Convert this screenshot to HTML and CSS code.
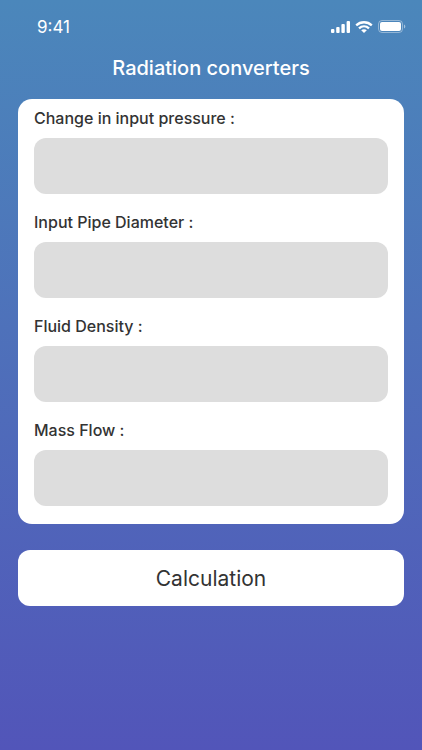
FILE: index.html
```
<!DOCTYPE html>
<html lang="en">
<head>
    <meta charset="UTF-8">
    <meta name="viewport" content="width=device-width, initial-scale=1.0">
    <title>Radiation converters</title>
    <link rel="stylesheet" href="styles.css">
</head>
<body>

<div class="status-bar">
    <span class="time">9:41</span>
    <div class="status-icons">
        <svg width="19" height="12" viewBox="0 0 19 12" fill="#fff">
            <rect x="0" y="8" width="3.4" height="4" rx="1"/>
            <rect x="5.2" y="6" width="3.4" height="6" rx="1"/>
            <rect x="10.4" y="3" width="3.4" height="9" rx="1"/>
            <rect x="15.6" y="0" width="3.4" height="12" rx="1"/>
        </svg>
        <svg width="18" height="12" viewBox="0 0 18 12" fill="none" stroke="#fff" stroke-width="2.3">
            <path d="M1.2 4.3C5.6 0.2 12.4 0.2 16.8 4.3"/>
            <path d="M4 7.4C6.9 4.7 11.1 4.7 14 7.4"/>
            <path d="M9 12L6.2 9.2C7.8 7.8 10.2 7.8 11.8 9.2Z" fill="#fff" stroke="none"/>
        </svg>
        <svg width="28" height="13" viewBox="0 0 28 13" fill="#fff">
            <rect x="0.5" y="0.5" width="24" height="12" rx="3.5" fill="none" stroke="#fff" stroke-opacity="0.4"/>
            <rect x="2" y="2" width="21" height="9" rx="2"/>
            <path d="M26 4.5C27.8 5.2 27.8 7.8 26 8.5Z" fill-opacity="0.5"/>
        </svg>
    </div>
</div>

<h1>Radiation converters</h1>

<form class="converter">
    <div class="card">
        <label for="pressure">Change in input pressure :</label>
        <input type="text" id="pressure">

        <label for="diameter">Input Pipe Diameter :</label>
        <input type="text" id="diameter">

        <label for="density">Fluid Density :</label>
        <input type="text" id="density">

        <label for="massFlow">Mass Flow :</label>
        <input type="text" id="massFlow">
    </div>
    <button type="button">Calculation</button>
</form>

</body>
</html>
```
FILE: styles.css
```
body {
    font-family: 'Inter', sans-serif;
    min-height: 100vh;
    margin: 0;
    background: linear-gradient(#4b87bb, #5255b9);
    color: #333333;
}
.status-bar {
    display: flex;
    justify-content: space-between;
    align-items: center;
    height: 53px;
    padding: 0 16px 0 37px;
    color: #ffffff;
}
.time {
    font-size: 17px;
}
.status-icons {
    display: flex;
    align-items: center;
    gap: 5px;
}
h1 {
    margin: 0;
    font-size: 20px;
    line-height: 30px;
    font-weight: 500;
    text-align: center;
    color: #ffffff;
}
.converter {
    padding: 16px 18px 24px;
}
.card {
    background-color: #ffffff;
    border-radius: 14px;
    padding: 7px 16px 18px;
}
label {
    display: block;
    font-size: 16px;
    line-height: 24px;
    font-weight: 500;
}
input {
    display: block;
    width: 100%;
    height: 56px;
    margin: 8px 0 16px;
    padding: 0 16px;
    box-sizing: border-box;
    background-color: #dddddd;
    border: none;
    border-radius: 12px;
    font-family: inherit;
    font-size: 16px;
}
input:last-child {
    margin-bottom: 0;
}
button {
    display: block;
    width: 100%;
    height: 56px;
    margin-top: 26px;
    background-color: #ffffff;
    color: #333333;
    border: none;
    border-radius: 12px;
    font-family: inherit;
    font-size: 21px;
    cursor: pointer;
}
```
